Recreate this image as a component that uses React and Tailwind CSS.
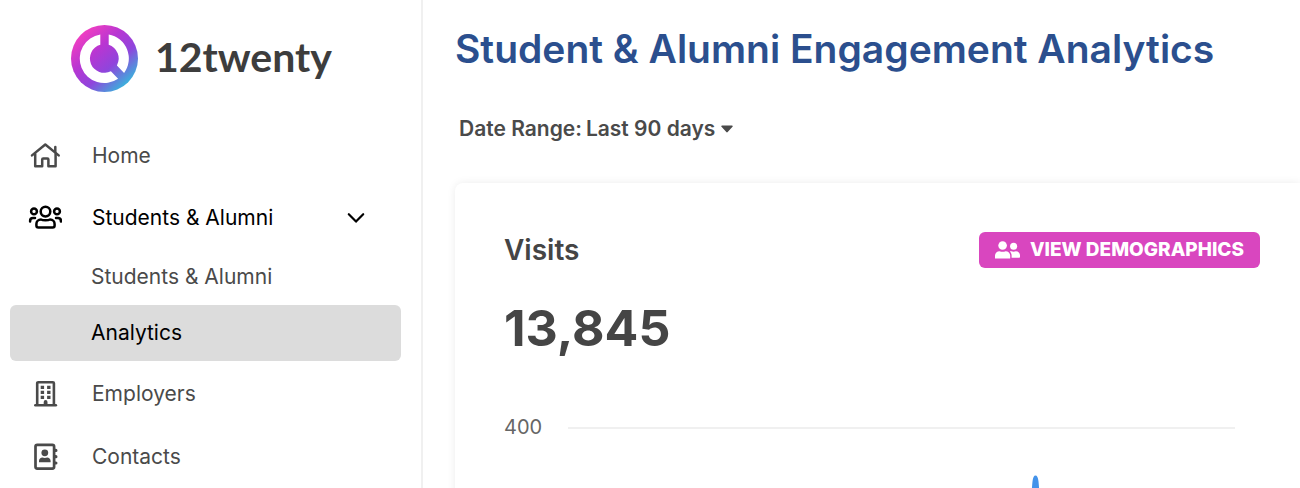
import { useState } from 'react';

function Logo() {
    return (
        <svg className="w-[67px] h-[67px] shrink-0" viewBox="0 0 67 67" aria-hidden="true">
            <defs>
                <linearGradient id="brand" x1="0.12" y1="0.12" x2="0.82" y2="0.92">
                    <stop offset="0" stopColor="#f53fc0" />
                    <stop offset="0.35" stopColor="#b836d2" />
                    <stop offset="0.65" stopColor="#8f45dc" />
                    <stop offset="1" stopColor="#35b8dc" />
                </linearGradient>
            </defs>
            <circle cx="33.5" cy="33.5" r="33.5" fill="url(#brand)" />
            <path d="M29.3 9.4A24.5 24.5 0 1 0 47.1 53.8L39.9 46.2A14.3 14.3 0 1 1 29.3 19.8Z" fill="#fff" />
            <path d="M37.700 9.400A24.500 24.500 0 0 1 53.100 48L45.900 40.400A14.300 14.300 0 0 0 37.700 19.800Z" fill="#fff" />
        </svg>
    );
}

function HomeIcon() {
    return (
        <svg className="w-[34px] h-7" viewBox="0 0 34 28" fill="none" stroke="currentColor" strokeWidth="2.5" strokeLinecap="round" strokeLinejoin="round" aria-hidden="true">
            <path d="M4 13.400 L17.300 2.500 L30.700 13.400" />
            <path d="M27.300 5v5" />
            <path d="M7.200 12V24.200H14.200V17.500c0-.6.400-1 1-1h4.200c.6 0 1 .4 1 1V24.200H27.600V12" />
        </svg>
    );
}

function UsersIcon() {
    return (
        <svg className="w-[34px] h-7" viewBox="0 0 34 28" fill="none" stroke="currentColor" strokeWidth="2.5" strokeLinecap="round" strokeLinejoin="round" aria-hidden="true">
            <circle cx="17.500" cy="7.600" r="4.800" />
            <circle cx="6" cy="7.400" r="2.900" />
            <circle cx="29" cy="7.400" r="2.900" />
            <path d="M13 15.500c1.600.9 7.400.9 9 0 2.800 0 4.600 2 4.600 4.400v1.700c0 1.200-.8 2-2 2H10.400c-1.200 0-2-.8-2-2v-1.700c0-2.400 1.800-4.400 4.600-4.400z" />
            <path d="M2.100 17.500v-.6c0-1.700 1.200-2.900 2.900-2.900h2" />
            <path d="M32.900 17.500v-.6c0-1.700-1.200-2.900-2.900-2.900h-2" />
        </svg>
    );
}

function BuildingIcon() {
    return (
        <svg className="w-[34px] h-7" viewBox="0 0 34 28" fill="none" stroke="currentColor" aria-hidden="true">
            <path d="M9.200 25V3.300c0-.7.400-1.100 1.100-1.100h14.500c.7 0 1.100.4 1.100 1.100V25" strokeWidth="2.600" />
            <path d="M7.300 25.200h20.600" strokeWidth="2.500" strokeLinecap="round" />
            <path d="M12.700 7.300h3.400M19.100 7.300h3.400M12.700 12.300h3.400M19.100 12.300h3.400M12.700 17.300h3.400M19.100 17.300h3.400" strokeWidth="3.300" />
            <path d="M15.700 25v-3a1.900 1.900 0 0 1 3.800 0v3z" fill="currentColor" stroke="none" />
        </svg>
    );
}

function ContactsIcon() {
    return (
        <svg className="w-[34px] h-7" viewBox="0 0 34 28" fill="none" stroke="currentColor" aria-hidden="true">
            <rect x="7.500" y="1.800" width="18.600" height="23.800" rx="1.800" strokeWidth="2.700" />
            <path d="M27.200 7.400h.7M27.200 13.700h.7M27.200 20h.7" strokeWidth="3.200" strokeLinecap="round" />
            <circle cx="16.800" cy="9.800" r="3.400" fill="currentColor" stroke="none" />
            <path d="M11 19.200v-1.200c0-2 1.600-3.500 3.500-3.500.9.500 3.700.5 4.600 0 1.900 0 3.500 1.500 3.500 3.500v1.200z" fill="currentColor" stroke="none" />
        </svg>
    );
}

function PeopleIcon() {
    return (
        <svg className="w-[25px] h-[18px]" viewBox="0 0 25 18" fill="currentColor" aria-hidden="true">
            <circle cx="7.600" cy="4.500" r="4.300" />
            <circle cx="18.600" cy="5.300" r="3.500" />
            <path d="M0 17.500v-2.700C0 12 2 10.200 4.600 10.200c1.800.8 4.200.8 6 0 2.600 0 4.600 1.800 4.600 4.600v2.700z" />
            <path d="M16.600 16.800v-2.200c0-1.800-.7-3.200-1.800-4.100.4-.2.900-.3 1.400-.3 1.500.6 3.300.6 4.800 0 2.200 0 4 1.700 4 4v1.600c0 .6-.4 1-1 1z" />
        </svg>
    );
}

function NavLink({ icon: Icon, label }) {
    return (
        <a href="#" className="flex items-center h-[63px] pl-[18px] text-[#4a4a4a]">
            <Icon />
            <span className="ml-[30px]">{label}</span>
        </a>
    );
}

function Sidebar() {
    const [open, setOpen] = useState(true);

    return (
        <aside className="w-[423px] shrink-0 border-r-2 border-[#f0f0f0] pl-2.5 pr-5">
            <a href="#" className="flex items-center gap-[17px] h-[124px] pb-2 pl-[61px] text-[#3d3d3d]">
                <Logo />
                <span className="pb-1 font-['Lato',sans-serif] font-bold text-[41px] leading-none">12twenty</span>
            </a>
            <nav className="text-[21px]">
                <NavLink icon={HomeIcon} label="Home" />
                <button
                    type="button"
                    aria-expanded={open}
                    onClick={() => setOpen(!open)}
                    className="flex items-center w-full h-[62px] pl-[18px] pr-9 text-black"
                >
                    <UsersIcon />
                    <span className="ml-[30px]">Students &amp; Alumni</span>
                    <svg className="w-[18px] h-3 ml-auto" viewBox="0 0 18 12" fill="none" stroke="currentColor" strokeWidth="2.200" strokeLinecap="round" strokeLinejoin="round" aria-hidden="true">
                        <path d="M1.800 2.200 L9 9.600 L16.200 2.200" />
                    </svg>
                </button>
                {open && (
                    <div className="mb-px">
                        <a href="#" className="flex items-center h-14 pl-[81px] rounded-md text-[#4a4a4a]">Students &amp; Alumni</a>
                        <a href="#" aria-current="page" className="flex items-center h-14 pl-[81px] rounded-md bg-[#dcdcdc] text-black">Analytics</a>
                    </div>
                )}
                <NavLink icon={BuildingIcon} label="Employers" />
                <NavLink icon={ContactsIcon} label="Contacts" />
            </nav>
        </aside>
    );
}

function DateRange() {
    return (
        <div className="flex items-center mt-[38px] pl-1 text-[21px] leading-8 font-semibold text-[#4a4a4a]">
            <label htmlFor="range" className="mr-1">Date Range:</label>
            <div className="relative">
                <select id="range" defaultValue="90" className="appearance-none field-sizing-content bg-transparent pr-[18px]">
                    <option value="30">Last 30 days</option>
                    <option value="90">Last 90 days</option>
                    <option value="365">Last year</option>
                </select>
                <svg className="absolute right-0 top-3 w-3 h-2 pointer-events-none" viewBox="0 0 12 8" fill="currentColor" aria-hidden="true">
                    <path d="M1 .5h10c.7 0 1 .8.500 1.300L6.700 7.100c-.4.400-1 .4-1.400 0L.5 1.800C0 1.300.3.500 1 .5z" />
                </svg>
            </div>
        </div>
    );
}

function VisitsCard() {
    return (
        <section className="flex-1 mt-[38px] pt-[49px] pl-[49px] pr-10 rounded-tl-lg bg-white shadow-[0_0_8px_rgba(0,0,0,0.08)]">
            <div className="flex items-center justify-between">
                <h2 className="text-[28px] leading-8 font-semibold">Visits</h2>
                <button type="button" className="flex items-center gap-2.5 h-9 px-4 rounded-md bg-[#d946bf] text-white text-[19px] font-extrabold whitespace-nowrap">
                    <PeopleIcon />
                    VIEW DEMOGRAPHICS
                </button>
            </div>
            <p className="mt-[30px] text-[50px] leading-[60px] font-bold">13,845</p>
            <div className="flex items-start mt-[53px] pr-[25px]">
                <span className="w-16 text-[20px] leading-8 text-[#666]">400</span>
                <svg className="flex-1 h-[300px] mt-4" viewBox="0 0 667 300" preserveAspectRatio="none" fill="none" role="img" aria-label="Visits per day">
                    <path d="M0 1H667" stroke="#f0f0f0" strokeWidth="2" />
                    <path d="M463.500 120 C465 80 465.800 50.500 467.500 50.500 C469.200 50.500 470 80 471.500 120" stroke="#4393ea" strokeWidth="4" />
                </svg>
            </div>
        </section>
    );
}

export default function App() {
    return (
        <div className="flex h-screen overflow-hidden bg-white font-['Inter',sans-serif] text-[#454545]">
            <Sidebar />
            <main className="flex flex-col flex-1 min-w-0 pl-8 pt-[23px]">
                <h1 className="text-[39px] leading-[52px] font-semibold text-[#2b4f8e] whitespace-nowrap">Student &amp; Alumni Engagement Analytics</h1>
                <DateRange />
                <VisitsCard />
            </main>
        </div>
    );
}
